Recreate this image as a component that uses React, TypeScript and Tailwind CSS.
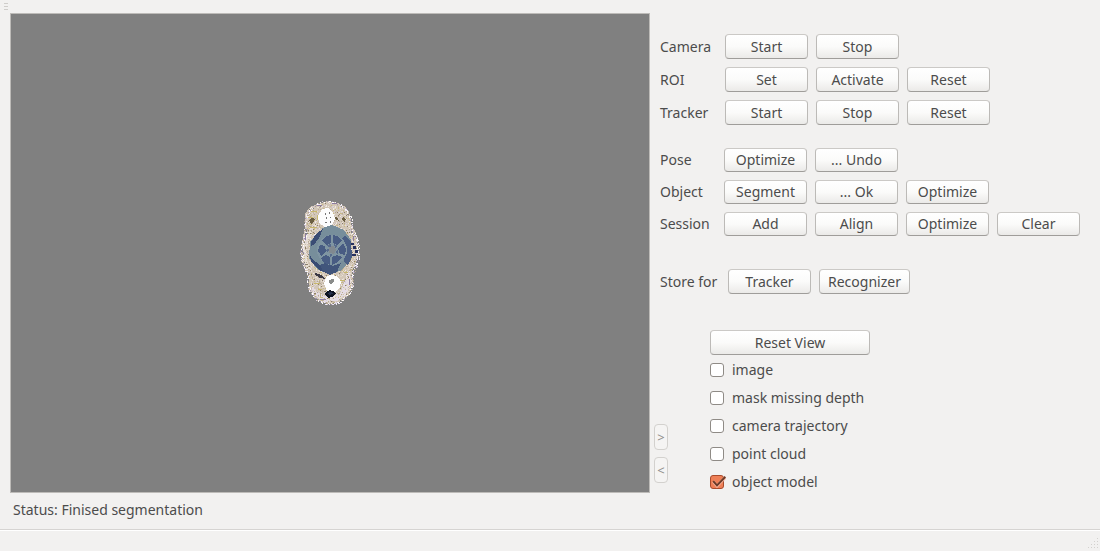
import { useState } from "react";

interface RowProps {
  label: string;
  buttons: string[];
  labelClass?: string;
  buttonClass?: string;
}

const cameraRows: RowProps[] = [
  { label: "Camera", buttons: ["Start", "Stop"] },
  { label: "ROI", buttons: ["Set", "Activate", "Reset"] },
  { label: "Tracker", buttons: ["Start", "Stop", "Reset"] },
];

const modelRows: RowProps[] = [
  { label: "Pose", buttons: ["Optimize", "... Undo"] },
  { label: "Object", buttons: ["Segment", "... Ok", "Optimize"] },
  { label: "Session", buttons: ["Add", "Align", "Optimize", "Clear"] },
];

const viewOptions = ["image", "mask missing depth", "camera trajectory", "point cloud", "object model"];

const buttonBase =
  "rounded-[4px] border border-[#bcbab7] border-t-[#cbc9c6] border-b-[#9f9d9a] bg-linear-to-b from-white via-[#fbfbfa] to-[#ebeae8] leading-none whitespace-nowrap";

const arrowButton =
  "h-[26px] w-[14px] rounded-[4px] border border-[#d3d1ce] bg-[#f5f4f3] text-[13px] leading-none text-[#8f8d8a]";

function ControlRow({ label, buttons, labelClass = "w-[65px]", buttonClass = "h-[25px]" }: RowProps) {
  return (
    <div className="flex items-center">
      <span className={labelClass}>{label}</span>
      <div className="flex gap-2">
        {buttons.map((text) => (
          <button key={text} type="button" className={`${buttonBase} min-w-[83px] px-2 ${buttonClass}`}>
            {text}
          </button>
        ))}
      </div>
    </div>
  );
}

function CheckRow({ label, checked, onToggle }: { label: string; checked: boolean; onToggle: () => void }) {
  return (
    <label className="flex h-7 items-center gap-2">
      <span className="relative flex size-[14px]">
        <input
          type="checkbox"
          checked={checked}
          onChange={onToggle}
          className="size-[14px] appearance-none rounded-[3px] border border-[#8f8b86] bg-white checked:border-[#a84b2c] checked:bg-[#ee7f56]"
        />
        {checked && (
          <svg viewBox="0 0 16 14" className="pointer-events-none absolute top-0 left-0 h-[14px] w-4 fill-none" aria-hidden="true">
            <path d="M3.2 6.6 7 11 15 2.6" stroke="#f7b199" strokeWidth="3" />
            <path d="M3.2 6.2 7 10.4 15.4 1.8" stroke="#6a3a28" strokeWidth="2" />
          </svg>
        )}
      </span>
      <span>{label}</span>
    </label>
  );
}

// Speckles of the scanned point cloud, in the local 60x106 space of the model
function makeSpeckles() {
  const edgeColors = ["#f3eef6", "#ffffff", "#cfc4d8", "#e9e2ef", "#9f93ab", "#f4f0ec", "#b3a58f", "#808080"];
  const bodyColors = ["#e9e0d6", "#c5b7a6", "#ded3c6", "#cdbfae", "#efe8e2", "#b5a894", "#d8cfd8", "#8f8068", "#c9ba84", "#e3dace"];
  const dots: { x: number; y: number; fill: string }[] = [];
  let seed = 7;
  const rand = () => {
    seed = (seed * 16807) % 2147483647;
    return seed / 2147483647;
  };
  for (let y = 0; y < 106; y++) {
    for (let x = 0; x < 60; x++) {
      const top = Math.hypot((x - 28) / 24, (y - 25) / 24);
      const mid = Math.hypot((x - 30) / 29, (y - 52) / 33);
      const low = Math.hypot((x - 30) / 23, (y - 80) / 24);
      const edge = Math.min(top, mid, low);
      const r = rand();
      const pick = rand();
      if (edge > 1.04) continue;
      if (edge > 0.93) {
        if (r < 0.6) dots.push({ x, y, fill: edgeColors[Math.floor(pick * 8)] });
      } else if (r < 0.4) {
        dots.push({ x, y, fill: bodyColors[Math.floor(pick * 10)] });
      }
    }
  }
  return dots;
}

const speckles = makeSpeckles();

function ObjectModel() {
  return (
    <svg viewBox="0 0 60 106" className="w-[9.4%]" shapeRendering="crispEdges" role="img" aria-label="object model">
      <path
        d="M19 4 27 1 38 3 46 7 50 14 51 24 56 33 58 46 56 63 52 72 53 86 48 97 38 103 27 104 15 99 9 90 9 78 3 66 1 52 3 36 5 27 5 14 10 7Z"
        fill="#d3c7b8"
      />
      <path d="M9 28 15 24 12 33 7 45 7 61 12 72 7 69 3 55 4 40Z" fill="#e6ddd3" />
      <path d="M48 70 52 82 47 94 37 101 24 102 13 94 11 82 16 92 29 98 41 92Z" fill="#e5dce5" />
      {speckles.map((dot) => (
        <rect key={`${dot.x}-${dot.y}`} x={dot.x} y={dot.y} width="1" height="1" fill={dot.fill} />
      ))}
      {/* Blue body */}
      <path d="m23 28 9-3 12 5 7 10-1 20-8 10-12 5-13-6-8-11 1-16Z" fill="#778e9b" />
      <path d="m11 42 5-8 7-5-4 9-5 7-3 1Zm-1 13 3 5 6 4 7 9-7-3-8-8Z" fill="#3a4c74" />
      <path d="m45 36 6 5 1 16-4 8-4-3 2-13-4-10Z" fill="#4a5e84" />
      <path d="m20 65 6-2 7 3 8-3-4 9-7 3-7-4Z" fill="#41557b" />
      <circle cx="32" cy="50" r="15" fill="#7f95a2" />
      <path
        d="m25 37 6-2v8l-4 2-5-4Zm8-2 6 2 3 4-5 4-4-2Zm10 8 3 6-1 6-5-1-2-5Zm-1 14-4 5-6 3v-8l5-2ZM30 65l-6-2-3-5 5-3 4 2ZM20 45l5 1 1 6-5 4-3-5Z"
        fill="#485c83"
      />
      <path d="m27 45 4-1v3h-3Zm7-1 4 2-3 2Zm4 6v4l-3-2Zm-5 5-3 2v-3Zm-5-2-2-3 3-1Z" fill="#56698c" />
      <path d="m29 47 5-1 2 4-2 4-5-1Z" fill="#818990" />
      {/* Top cap */}
      <path d="m22 9 7-1 4 4 2 7-3 6-7 2-6-4-1-7Z" fill="#fdfdfd" />
      <path d="M25 13h1v2h-1zm4-1h1v2h-1zm-3 5h1v2h-1zm4 0h1v1h-1zm-5 5h2v1h-2zm5-1h1v2h-1z" fill="#777" />
      {/* Bottom cap */}
      <path d="m26 77 4-2 7 1 4 5-1 7-5 4-8-1-3-7Z" fill="#fff" />
      <path d="m29 80 5-1v3l-3 3-2-2Z" fill="#8a8c8a" />
      <path d="m26 92 4-2 5 2 1 2-3 3-5 1-3-3Z" fill="#101522" />
      <path d="m28 93 3-1 2 2-4 1Z" fill="#24304b" />
      {/* Dark marks and stray points */}
      <path d="m9 20 3-2 3 1-1 3-3 2Zm26-3 3 1 1 3-3-1Zm8 0 3 2-1 3-3-2Z" fill="#6b5f42" />
      <path d="M11 11h6v1h-6zM8 17h5v1H8zm9-2h1v5h-1zm-7 12h7v1h-7zm34 45h4v1h-4zm-4 8h5v1h-5zM14 83h6v1h-6zm4 6h4v1h-4z" fill="#c7b76d" />
      <path d="M53 46h3v3h-3zm2 4h3v3h-3zm-3 4h4v2h-4zm-1-11h3v2h-3z" fill="#26305f" />
      <path d="m15 73 6 2 4 4-5-1-5-3Z" fill="#3c3a46" />
      <path d="M17 5h5v1h-5zM32 3h5v1h-5zM5 34h1v6H5zm48 2h1v5h-1zm-4 43h1v6h-1zM20 99h6v1h-6z" fill="#8d7c9f" />
    </svg>
  );
}

export default function App() {
  const [checked, setChecked] = useState<string[]>(["object model"]);

  const toggle = (name: string) => {
    setChecked((prev) => (prev.includes(name) ? prev.filter((n) => n !== name) : [...prev, name]));
  };

  return (
    <div className="flex min-h-screen flex-col bg-[#f2f1f0] font-['Noto_Sans',sans-serif] text-[14px] leading-5 text-[#4c4c4c]">
      {/* Toolbar handle */}
      <div className="flex h-[13px] flex-col gap-[2px] pt-[3px] pl-1">
        <span className="h-px w-1 bg-[#cfcdca]" />
        <span className="h-px w-1 bg-[#cfcdca]" />
        <span className="h-px w-1 bg-[#cfcdca]" />
      </div>

      <main className="flex items-stretch gap-1 pl-[10px]">
        {/* 3D view */}
        <div className="flex aspect-[4/3] min-w-0 flex-1 items-center justify-center self-start border border-[#bdbbb8] bg-[#808080]">
          <ObjectModel />
        </div>

        <div className="flex w-[446px] shrink-0 flex-col pt-[21px]">
          <div className="flex flex-col gap-2 pl-[6px]">
            {cameraRows.map((row) => (
              <ControlRow key={row.label} {...row} />
            ))}
          </div>

          <div className="mt-[23px] flex flex-col gap-2 pl-[6px]">
            {modelRows.map((row) => (
              <ControlRow key={row.label} {...row} labelClass="w-16" buttonClass="h-6" />
            ))}
          </div>

          <div className="mt-[33px] pl-[6px]">
            <ControlRow label="Store for" buttons={["Tracker", "Recognizer"]} labelClass="w-[68px]" />
          </div>

          <div className="mt-9 flex gap-[42px]">
            <div className="flex flex-col gap-[7px] pt-[94px]">
              <button type="button" disabled className={arrowButton}>
                &gt;
              </button>
              <button type="button" disabled className={arrowButton}>
                &lt;
              </button>
            </div>
            <div className="flex flex-col items-start">
              <button type="button" className={`${buttonBase} mb-px h-[25px] w-40`}>
                Reset View
              </button>
              {viewOptions.map((name) => (
                <CheckRow key={name} label={name} checked={checked.includes(name)} onToggle={() => toggle(name)} />
              ))}
            </div>
          </div>
        </div>
      </main>

      <p className="pt-1 pb-[9px] pl-[13px]">Status: Finised segmentation</p>

      {/* Status bar */}
      <footer className="flex flex-1 items-end justify-end border-t border-[#d6d4d2] pr-px pb-[2px] shadow-[inset_0_1px_0_#fff]">
        <svg viewBox="0 0 12 12" className="size-3 fill-[#d3d1ce]" shapeRendering="crispEdges" aria-hidden="true">
          <path d="M10 1h1v1h-1zM7 4h1v1H7zM10 4h1v1h-1zM4 7h1v1H4zM7 7h1v1H7zM10 7h1v1h-1zM1 10h1v1H1zM4 10h1v1H4zM7 10h1v1H7zM10 10h1v1h-1z" />
        </svg>
      </footer>
    </div>
  );
}
